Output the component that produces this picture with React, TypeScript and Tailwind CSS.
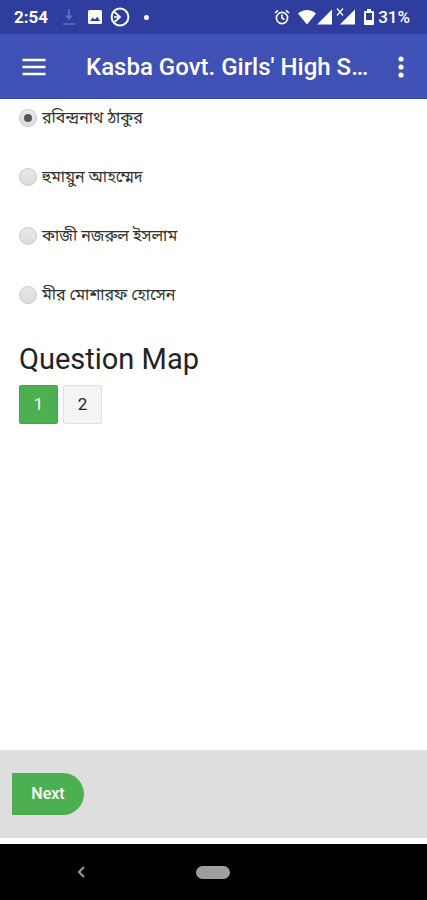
import React, { useState } from 'react';

const writers = [
  'রবিন্দ্রনাথ ঠাকুর',
  'হুমায়ুন আহম্মেদ',
  'কাজী নজরুল ইসলাম',
  'মীর মোশারফ হোসেন',
];

const StatusBar: React.FC = () => (
  <div className="flex h-[34px] items-center justify-between bg-[#2f3e9e] pl-[14px] pr-[17px] text-white">
    <div className="flex items-center">
      <span className="w-[34px] text-[17px] leading-5 font-bold">2:54</span>
      {/* Download */}
      <svg viewBox="0 0 14 16" className="ml-[14px] h-4 w-[14px]" fill="none" stroke="#6672ba" strokeWidth="1.6">
        <path d="M7 0v10M1 15h12" />
        <path d="M3 6.500h8L7 11z" fill="#6672ba" stroke="none" />
      </svg>
      {/* Picture */}
      <svg viewBox="0 0 14 14" className="ml-3 h-[14px] w-[14px]">
        <rect width="14" height="14" rx="1.5" fill="white" />
        <path d="M2 11l2.8-3.6 2 2.2L9.4 6.8 12 11z" fill="#2f3e9e" />
      </svg>
      {/* Sync circle */}
      <svg viewBox="0 0 20 20" className="ml-2 h-5 w-5" fill="none" stroke="white">
        <circle cx="10" cy="10" r="8.4" strokeWidth="2" />
        <path d="M4.500 5L10 10l-5.500 5M4 10h5" strokeWidth="1.700" />
      </svg>
      <span className="ml-[14px] h-[5px] w-[5px] rounded-full bg-white" />
    </div>

    <div className="flex items-center">
      {/* Alarm */}
      <svg viewBox="0 0 16 16" className="h-4 w-4" fill="none" stroke="white" strokeWidth="1.600">
        <circle cx="8" cy="9" r="5.600" />
        <path d="M8 5.500V9l2.500 1.700M1 4l3-2.700M15 4l-3-2.700" />
      </svg>
      {/* Wifi */}
      <svg viewBox="0 0 20 16" className="ml-[7px] h-4 w-5" fill="white">
        <path d="M1 4.500C6 -0.300 14 -0.300 19 4.500L10 15.500z" />
      </svg>
      {/* Signal strength */}
      <svg viewBox="0 0 16 16" className="h-4 w-4" fill="white">
        <path d="M15 0.500V15.500H0z" />
      </svg>
      {/* Second sim without data */}
      <svg viewBox="0 0 20 18" className="ml-[3px] h-[18px] w-5">
        <path d="M19 1.500V16.500H4z" fill="white" />
        <path d="M1 0.500l6 7M7 0.500l-6 7" stroke="#2f3e9e" strokeWidth="3" />
        <path d="M1 0.500l6 7M7 0.500l-6 7" stroke="white" strokeWidth="1.200" />
      </svg>
      {/* Battery */}
      <svg viewBox="0 0 10 16" className="ml-2 h-4 w-[10px]">
        <path d="M3 0h4v2h2q1 0 1 1v12q0 1-1 1H1q-1 0-1-1V3q0-1 1-1h2z" fill="white" />
        <path d="M2 4h6v7H2z" fill="#2f3e9e" />
      </svg>
      <span className="ml-1 text-[17px] leading-5 font-medium">31%</span>
    </div>
  </div>
);

const App: React.FC = () => {
  const [answer, setAnswer] = useState(0);

  return (
    <div className="flex min-h-screen flex-col bg-white font-['Roboto','Noto_Sans_Bengali',sans-serif] text-[#222]">
      <StatusBar />

      <header className="flex h-[65px] items-center border-b border-[#3545ad] bg-[#3f51b5] pt-[2px] pl-[22px] pr-4 text-white">
        <button type="button" aria-label="Open menu">
          <svg viewBox="0 0 24 18" className="h-[18px] w-6" stroke="white" strokeWidth="2.600">
            <path d="M0.500 2h23M0.500 9h23M0.500 16h23" />
          </svg>
        </button>
        <h1 className="ml-10 flex-1 truncate text-[24px] leading-8 font-medium">Kasba Govt. Girls' High S…</h1>
        <button type="button" aria-label="More options" className="flex w-5 justify-center">
          <svg viewBox="0 0 6 22" className="h-[22px] w-[6px]" fill="white">
            <circle cx="3" cy="3" r="2.600" />
            <circle cx="3" cy="11" r="2.600" />
            <circle cx="3" cy="19" r="2.600" />
          </svg>
        </button>
      </header>

      <main className="flex-1 px-[19px] pt-[9px]">
        <fieldset className="flex flex-col gap-[39px]">
          {writers.map((name, i) => (
            <label key={name} className="flex h-5 items-center gap-[5px]">
              <input
                type="radio"
                name="writer"
                checked={answer === i}
                onChange={() => setAnswer(i)}
                className="flex h-[18px] w-[18px] shrink-0 appearance-none items-center justify-center rounded-full border border-[#cacaca] bg-linear-to-b from-[#e9e9e9] to-[#dcdcdc] before:h-2 before:w-2 before:rounded-full checked:before:bg-[#555]"
              />
              <span className="text-[16px] leading-5 whitespace-nowrap text-[#333]">{name}</span>
            </label>
          ))}
        </fieldset>

        <h2 className="mt-9 text-[29px] leading-9 font-normal">Question Map</h2>
        <div className="mt-2 flex gap-[5px]">
          <button type="button" className="h-[39px] w-[39px] rounded-xs border border-[#43a547] bg-[#4caf50] text-[17px] text-white">
            1
          </button>
          <button type="button" className="h-[39px] w-[39px] rounded-xs border border-[#e2e2e2] bg-[#f4f4f4] text-[17px]">
            2
          </button>
        </div>
      </main>

      <footer className="mb-[6px] h-[88px] bg-[#dedede] px-3 pt-[23px]">
        <button type="button" className="h-[42px] w-[72px] rounded-r-full bg-[#4caf50] text-[16px] font-medium text-white">
          Next
        </button>
      </footer>

      {/* System navigation */}
      <nav className="grid h-14 grid-cols-5 items-center bg-black">
        <button type="button" aria-label="Back" className="col-start-1 flex justify-end">
          <svg viewBox="0 0 8 12" className="h-3 w-2" fill="none" stroke="#9a9a9a" strokeWidth="2">
            <path d="M7 1L2 6l5 5" />
          </svg>
        </button>
        <button type="button" aria-label="Home" className="col-start-3 h-[13px] w-[34px] justify-self-center rounded-full bg-[#9e9e9e]" />
      </nav>
    </div>
  );
};

export default App;
